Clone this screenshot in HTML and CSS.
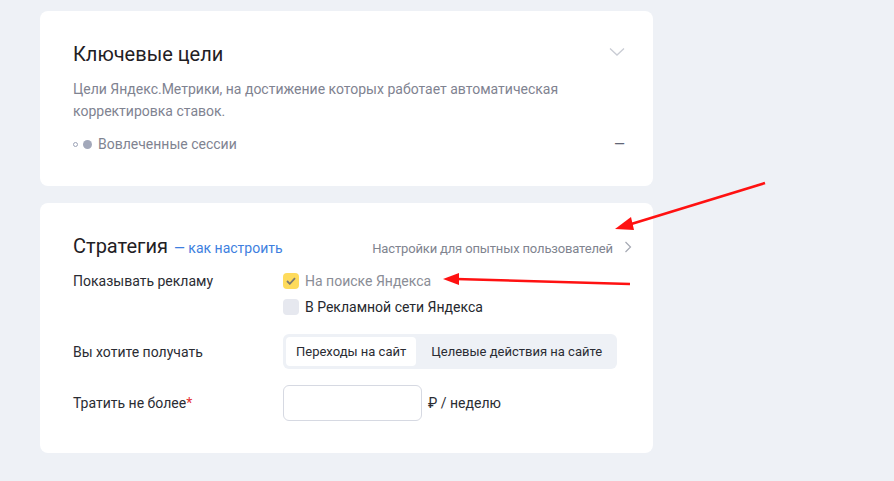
FILE: index.html
```html
<!DOCTYPE html>
<html lang="ru">
<head>
    <meta charset="UTF-8">
    <title>Стратегия</title>
    <link rel="stylesheet" href="styles.css">
</head>
<body>

    <div class="page">
        <div class="card card-goals">
            <div class="card-head">
                <h2 class="title">Ключевые цели</h2>
                <svg class="chevron-down" width="16" height="10" viewBox="0 0 16 10"><path d="M1 1.5l7 6.5 7-6.5" fill="none" stroke="#c9ccd4" stroke-width="1.3"/></svg>
            </div>
            <p class="desc">Цели Яндекс.Метрики, на достижение которых работает автоматическая корректировка ставок.</p>
            <div class="goal">
                <span class="ring"></span>
                <span class="dot"></span>
                <span class="goal-name">Вовлеченные сессии</span>
                <span class="goal-dash">—</span>
            </div>
        </div>

        <div class="card card-strategy">
            <div class="strategy-head">
                <h2 class="title">Стратегия</h2>
                <a href="#" class="howto">— как настроить</a>
                <a href="#" class="expert">Настройки для опытных пользователей
                    <svg width="8" height="12" viewBox="0 0 8 12"><path d="M1.5 1l5 5-5 5" fill="none" stroke="#a5a9b3" stroke-width="1.2"/></svg>
                </a>
            </div>

            <div class="row row-show">
                <div class="label">Показывать рекламу</div>
                <div class="control">
                    <label class="check check-on">
                        <span class="box"><svg width="10" height="8" viewBox="0 0 10 8"><path d="M1 4l2.8 2.8L9 1.2" fill="none" stroke="#7d7a70" stroke-width="1.8"/></svg></span>
                        На поиске Яндекса
                    </label>
                    <label class="check">
                        <span class="box"></span>
                        В Рекламной сети Яндекса
                    </label>
                </div>
            </div>

            <div class="row row-get">
                <div class="label">Вы хотите получать</div>
                <div class="segment">
                    <span class="seg seg-active">Переходы на сайт</span>
                    <span class="seg">Целевые действия на сайте</span>
                </div>
            </div>

            <div class="row row-spend">
                <div class="label">Тратить не более<span class="req">*</span></div>
                <div class="spend">
                    <input type="text" class="sum">
                    <span class="unit">₽ / неделю</span>
                </div>
            </div>
        </div>

        <svg class="arrows" width="894" height="481" viewBox="0 0 894 481">
            <g fill="#f11" stroke="#f11">
                <line x1="765" y1="183" x2="628" y2="225" stroke-width="2.6"/>
                <polygon points="615,229 631,217 634,230" stroke="none"/>
                <line x1="630" y1="284" x2="456" y2="279" stroke-width="2.6"/>
                <polygon points="443,279 459,273 459,285" stroke="none"/>
            </g>
        </svg>
    </div>

</body>
</html>
```

FILE: styles.css
```css
body {
    margin: 0;
    background: #eef1f6;
    font-family: Roboto, "Noto Sans", sans-serif;
    color: #22252b;
}
.page {
    position: relative;
    width: 894px;
    height: 481px;
    padding: 11px 0 0 40px;
    box-sizing: border-box;
    overflow: hidden;
}
.card {
    width: 613px;
    background: white;
    border-radius: 8px;
    box-sizing: border-box;
    padding: 0 28px 0 33px;
}
.card-goals {
    height: 175px;
    padding-top: 30px;
}
.card-strategy {
    height: 250px;
    margin-top: 17px;
    padding-top: 30px;
}
.card-head {
    display: flex;
    justify-content: space-between;
}
.chevron-down {
    margin-top: 6px;
}
.title {
    margin: 0;
    font-size: 20px;
    font-weight: 400;
    line-height: 26px;
    color: #1f2024;
}
.desc {
    margin: 11px 0 0;
    width: 500px;
    font-size: 14px;
    line-height: 22px;
    color: #7f8391;
}
.goal {
    display: flex;
    align-items: center;
    margin-top: 12px;
    font-size: 14px;
    line-height: 20px;
    color: #7f8391;
}
.ring {
    width: 3px;
    height: 3px;
    border: 1px solid #9ca3b7;
    border-radius: 50%;
    margin-right: 5px;
}
.dot {
    width: 9px;
    height: 9px;
    background: #a2a8ba;
    border-radius: 50%;
    margin-right: 6px;
}
.goal-dash {
    margin-left: auto;
    color: #626675;
}

.strategy-head {
    display: flex;
    align-items: baseline;
}
.howto {
    margin-left: 6px;
    font-size: 14px;
    color: #3e7fe0;
    text-decoration: none;
}
.expert {
    margin-left: auto;
    margin-right: -7px;
    font-size: 13px;
    letter-spacing: -0.15px;
    color: #80848f;
    text-decoration: none;
}
.expert svg {
    margin-left: 8px;
}

.row {
    display: flex;
    font-size: 14px;
    line-height: 20px;
}
.label {
    width: 210px;
    flex-shrink: 0;
    color: #2a2c33;
}
.req {
    color: #e42f2f;
}
.row-show {
    margin-top: 12px;
}
.control {
    display: flex;
    flex-direction: column;
    gap: 6px;
}
.check {
    display: flex;
    align-items: center;
    gap: 6px;
    color: #26282e;
}
.check-on {
    color: #8a8d96;
}
.box {
    width: 16px;
    height: 16px;
    border-radius: 4px;
    background: #e6e8ef;
    display: flex;
    align-items: center;
    justify-content: center;
}
.check-on .box {
    background: #fedb5c;
}

.row-get {
    margin-top: 17px;
    align-items: center;
}
.segment {
    display: flex;
    background: #eef1f6;
    border-radius: 6px;
    padding: 3px;
    width: 334px;
    box-sizing: border-box;
}
.seg {
    padding: 0 10px;
    line-height: 29px;
    font-size: 13px;
    white-space: nowrap;
    color: #2a2c33;
    border-radius: 4px;
}
.seg-active {
    background: white;
    margin-right: 5px;
}

.row-spend {
    margin-top: 16px;
    align-items: center;
}
.spend {
    display: flex;
    align-items: center;
}
.sum {
    width: 139px;
    height: 36px;
    box-sizing: border-box;
    border: 1px solid #d6d9e2;
    border-radius: 6px;
    margin: 0;
}
.unit {
    margin-left: 6px;
    color: #2a2c33;
}

.arrows {
    position: absolute;
    left: 0;
    top: 0;
    pointer-events: none;
}
```
